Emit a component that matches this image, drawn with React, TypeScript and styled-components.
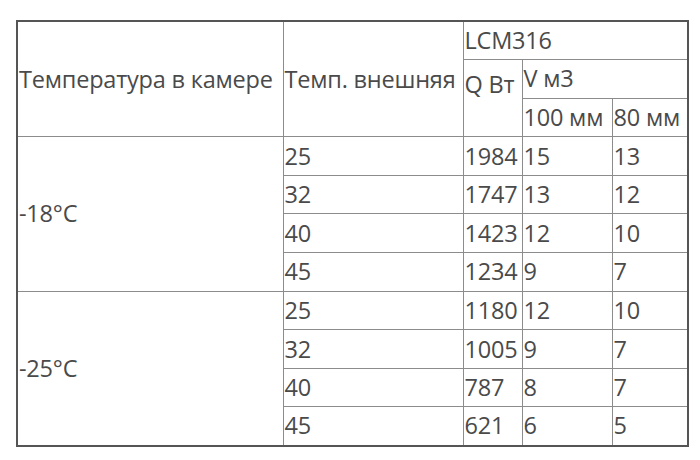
import styled, { createGlobalStyle } from 'styled-components';

const GlobalStyle = createGlobalStyle`
  html, body {
    margin: 0;
    padding: 0;
    background: #ffffff;
  }
`;

const Page = styled.div`
  width: 700px;
  height: 460px;
  padding: 20px 0 0 16px;
  box-sizing: border-box;
`;

const Table = styled.table`
  border-collapse: collapse;
  table-layout: fixed;
  width: 671px;
  border: 2px solid #555;
  font-family: 'Open Sans', 'Noto Sans', sans-serif;
  font-size: 23.5px;
  letter-spacing: -0.2px;
  color: #4a4a4a;
`;

const Cell = styled.td<{ $lift?: boolean }>`
  border: 1px solid #8c8c8c;
  height: 38.6px;
  padding: ${(p) => (p.$lift ? '0 1px 27px 1px' : '0 1px')};
  box-sizing: border-box;
  vertical-align: middle;
  white-space: nowrap;
  overflow: hidden;
  line-height: 27px;
`;

type Row = { ext: string; q: string; v100: string; v80: string };

const groups: { label: string; rows: Row[] }[] = [
  {
    label: '-18°C',
    rows: [
      { ext: '25', q: '1984', v100: '15', v80: '13' },
      { ext: '32', q: '1747', v100: '13', v80: '12' },
      { ext: '40', q: '1423', v100: '12', v80: '10' },
      { ext: '45', q: '1234', v100: '9', v80: '7' },
    ],
  },
  {
    label: '-25°C',
    rows: [
      { ext: '25', q: '1180', v100: '12', v80: '10' },
      { ext: '32', q: '1005', v100: '9', v80: '7' },
      { ext: '40', q: '787', v100: '8', v80: '7' },
      { ext: '45', q: '621', v100: '6', v80: '5' },
    ],
  },
];

export default function App() {
  return (
    <>
      <GlobalStyle />
      <Page>
        <Table>
          <colgroup>
            <col style={{ width: 266 }} />
            <col style={{ width: 180 }} />
            <col style={{ width: 59 }} />
            <col style={{ width: 90 }} />
            <col style={{ width: 76 }} />
          </colgroup>
          <tbody>
            <tr>
              <Cell rowSpan={3}>Температура в камере</Cell>
              <Cell rowSpan={3}>Темп. внешняя</Cell>
              <Cell colSpan={3}>LCM316</Cell>
            </tr>
            <tr>
              <Cell rowSpan={2} $lift>
                Q Вт
              </Cell>
              <Cell colSpan={2}>V м3</Cell>
            </tr>
            <tr>
              <Cell>100 мм</Cell>
              <Cell>80 мм</Cell>
            </tr>
            {groups.map((g) =>
              g.rows.map((r, i) => (
                <tr key={g.label + r.ext}>
                  {i === 0 && <Cell rowSpan={g.rows.length}>{g.label}</Cell>}
                  <Cell>{r.ext}</Cell>
                  <Cell>{r.q}</Cell>
                  <Cell>{r.v100}</Cell>
                  <Cell>{r.v80}</Cell>
                </tr>
              ))
            )}
          </tbody>
        </Table>
      </Page>
    </>
  );
}
